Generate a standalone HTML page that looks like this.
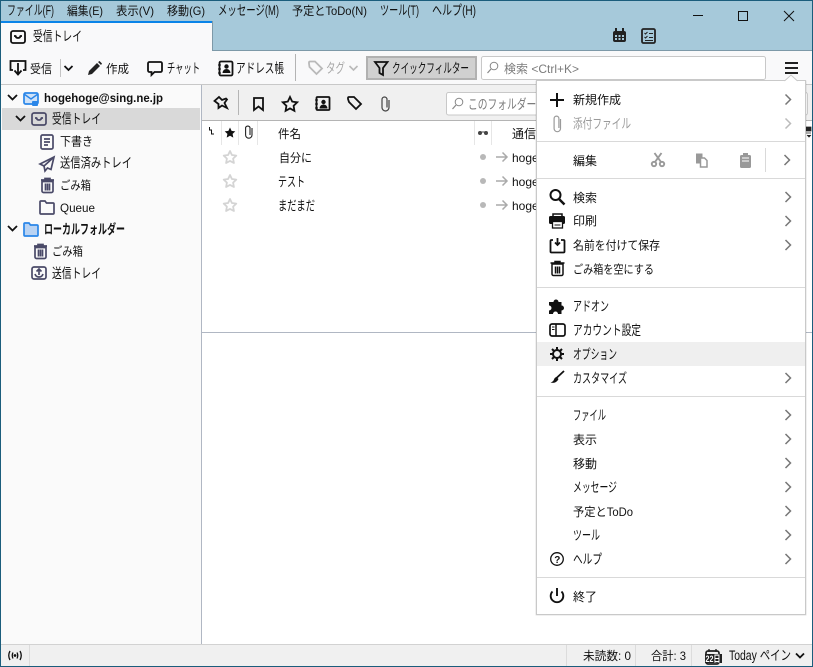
<!DOCTYPE html>
<html lang="ja"><head><meta charset="utf-8"><title>受信トレイ</title>
<style>
html,body{margin:0;padding:0;background:#fff}
svg{display:block}
text{font-family:"Liberation Sans","Noto Sans CJK JP",sans-serif;font-size:12px;fill:#111}
text.k{font-size:13.500px}
.g{fill:#9a9a9a}
.s{fill:none;stroke:#111;stroke-width:1.8}
.f{fill:none;stroke:#4a4a68;stroke-width:1.7}
.c{fill:none;stroke:#777;stroke-width:1.5}
.st{fill:none;stroke:#d4d4d4;stroke-width:1.8;stroke-linejoin:round}
</style></head><body>
<svg xmlns="http://www.w3.org/2000/svg" width="813" height="667" viewBox="0 0 813 667">
<!-- window -->
<rect width="813" height="667" fill="#1b5d7c"/>
<rect x="1" y="1" width="811" height="50" fill="#a6c9da"/>
<rect x="1" y="51" width="811" height="33" fill="#f9f9fa"/>
<rect x="1" y="50" width="811" height="1" fill="#7d99a8"/>
<rect x="1" y="84" width="811" height="1" fill="#c8c8c8"/>
<rect x="1" y="85" width="200" height="559" fill="#fafafa"/>
<rect x="201" y="85" width="1" height="559" fill="#b0b7c3"/>
<rect x="202" y="85" width="610" height="559" fill="#fff"/>
<rect x="202" y="85" width="610" height="35" fill="#f0f0f0"/>
<rect x="202" y="120" width="610" height="1" fill="#b4b4b4"/>
<rect x="202" y="332" width="610" height="1" fill="#b0b7c3"/>
<rect x="1" y="644" width="811" height="22" fill="#f0f0f0"/>
<rect x="1" y="644" width="811" height="1" fill="#d2d2d2"/>

<!-- menubar -->
<text class="k" x="7" y="15" textLength="47" lengthAdjust="spacingAndGlyphs">ファイル(F)</text>
<text x="67" y="15" textLength="36" lengthAdjust="spacingAndGlyphs">編集(E)</text>
<text x="116" y="15" textLength="38" lengthAdjust="spacingAndGlyphs">表示(V)</text>
<text x="167" y="15" textLength="38" lengthAdjust="spacingAndGlyphs">移動(G)</text>
<text class="k" x="218" y="15" textLength="61" lengthAdjust="spacingAndGlyphs">メッセージ(M)</text>
<text x="292" y="15" textLength="75" lengthAdjust="spacingAndGlyphs">予定とToDo(N)</text>
<text class="k" x="380" y="15" textLength="39" lengthAdjust="spacingAndGlyphs">ツール(T)</text>
<text class="k" x="432" y="15" textLength="44" lengthAdjust="spacingAndGlyphs">ヘルプ(H)</text>
<g fill="#111"><rect x="693" y="15" width="10" height="1"/></g>
<rect x="738.500" y="11.500" width="9" height="9" fill="none" stroke="#111"/>
<path d="M784 11l10 10M794 11l-10 10" stroke="#111" fill="none"/>

<!-- tab -->
<rect x="1" y="21" width="211" height="29" fill="#f9f9fa"/>
<rect x="212" y="21" width="1" height="30" fill="#7d99a8"/>
<rect x="1" y="21" width="211" height="2" fill="#0a84e8"/>
<rect x="1" y="50" width="211" height="1" fill="#f9f9fa"/>
<rect x="11" y="31" width="14" height="12" rx="2" class="s" stroke-width="2"/>
<path d="M14 36h1.500q.5 2 2.500 2t2.500-2h1.500" class="s" stroke-width="1.300"/>
<text class="k" x="33" y="41" textLength="49" lengthAdjust="spacingAndGlyphs">受信トレイ</text>
<!-- title right icons -->
<g fill="#222"><rect x="613" y="31" width="13" height="11" rx="2"/><rect x="615" y="28" width="2" height="4"/><rect x="622" y="28" width="2" height="4"/></g>
<g fill="#a6c9da"><rect x="615" y="35" width="2" height="2"/><rect x="618.500" y="35" width="2" height="2"/><rect x="622" y="35" width="2" height="2"/><rect x="615" y="38" width="2" height="2"/><rect x="618.500" y="38" width="2" height="2"/><rect x="622" y="38" width="2" height="2"/></g>
<rect x="642" y="29" width="13" height="14" rx="1.500" fill="none" stroke="#222" stroke-width="1.800"/>
<path d="M644.500 33l1 1 2-2M644.500 37l1 1 2-2M649 33.500h4M649 37.500h4M645 40.500h8" stroke="#222" fill="none"/>

<!-- main toolbar -->
<path d="M13 70h-2.500v-9h15v9h-2.500" class="s"/><path d="M18 63v11m-3.500-3.500l3.500 4 3.500-4" class="s"/>
<text x="30" y="73" textLength="22" lengthAdjust="spacingAndGlyphs">受信</text>
<rect x="60" y="59" width="1" height="18" fill="#c4c4c4"/>
<path d="M64.500 66l4 4 4-4" class="s"/>
<path d="M88 75l1-4 8-8 3 3-8 8z" fill="#222"/><path d="M98 62l1.500-1 2.500 2.500-1 1.500z" fill="#222"/>
<text x="106" y="73" textLength="23" lengthAdjust="spacingAndGlyphs">作成</text>
<path d="M149.500 62h11a1.500 1.500 0 0 1 1.500 1.500v7a1.500 1.500 0 0 1-1.500 1.500h-6l-3 3v-3h-2a1.500 1.500 0 0 1-1.500-1.500v-7a1.500 1.500 0 0 1 1.500-1.500z" class="s"/>
<text class="k" x="167" y="73" textLength="33" lengthAdjust="spacingAndGlyphs">チャット</text>
<rect x="219.500" y="61.500" width="13" height="14" rx="1.500" class="s"/>
<path d="M218 65h3M218 69h3M218 73h3" stroke="#111"/><circle cx="226.500" cy="66.500" r="2.200" fill="#111"/><path d="M222.500 73q.5-4 4-4t4 4z" fill="#111"/>
<text class="k" x="236" y="73" textLength="48" lengthAdjust="spacingAndGlyphs">アドレス帳</text>
<rect x="295" y="54" width="1" height="27" fill="#b4b4b4"/>
<path d="M309 63.500v-1a1 1 0 0 1 1-1h5l7 7-5.500 5.500-7-7z" fill="none" stroke="#b9b9b9" stroke-width="1.800"/>
<text class="k" x="326" y="73" textLength="19" lengthAdjust="spacingAndGlyphs" style="fill:#a8a8a8">タグ</text>
<path d="M349.500 66l4 4 4-4" fill="none" stroke="#b9b9b9" stroke-width="1.600"/>
<rect x="367" y="57" width="109" height="22" fill="#d0d0d0" stroke="#b1b1b1" stroke-width="2"/>
<path d="M375 62h12.500l-4.500 6v7l-3.500-2v-5z" class="s"/>
<text class="k" x="392" y="73" textLength="77" lengthAdjust="spacingAndGlyphs">クイックフィルター</text>
<rect x="481.500" y="56.500" width="284" height="23" rx="2" fill="#fff" stroke="#c8c8c8"/>
<circle cx="494" cy="66" r="3.800" fill="none" stroke="#888"/><path d="M491 69l-3.500 4" stroke="#888" stroke-width="1.200"/>
<text x="504" y="73" textLength="75" lengthAdjust="spacingAndGlyphs" style="fill:#7c7c7c">検索 &lt;Ctrl+K&gt;</text>
<path d="M785 63h13M785 68h13M785 73h13" stroke="#222" stroke-width="2" fill="none"/>

<!-- folder pane -->
<rect x="2" y="108" width="198" height="22" fill="#d9d9d9"/>
<path d="M8 95l4.500 4.500L17 95" class="s"/>
<rect x="24" y="93" width="14" height="11" rx="1.500" fill="#cfe2f8" stroke="#2a86e8" stroke-width="1.700"/>
<path d="M24 94l7 5 7-5" fill="none" stroke="#2a86e8" stroke-width="1.400"/>
<rect x="32" y="101" width="6" height="5" rx="1" fill="#2a86e8"/>
<text x="44" y="102" textLength="119" lengthAdjust="spacingAndGlyphs" style="font-weight:700;font-size:12px">hogehoge@sing.ne.jp</text>
<path d="M16 116l4.500 4.500L25 116" class="s"/>
<rect x="32" y="113" width="14" height="12" rx="2" class="f"/><path d="M35 118h1.500q.5 2 2.500 2t2.500-2H43" class="f" stroke-width="1.200"/>
<text class="k" x="52" y="123.500" textLength="49" lengthAdjust="spacingAndGlyphs">受信トレイ</text>
<rect x="41" y="135" width="12" height="14" rx="1.500" class="f"/><path d="M44 139h6M44 142h6M44 145h4" class="f" stroke-width="1"/>
<text x="60" y="145.500" textLength="33" lengthAdjust="spacingAndGlyphs">下書き</text>
<path d="M54 157l-14 7 4 2 1 5 2.500-3 3.500 1.500z" class="f"/><path d="M44 166l10-9" class="f" stroke-width="1.200"/>
<text class="k" x="60" y="167.500" textLength="72" lengthAdjust="spacingAndGlyphs">送信済みトレイ</text>
<path d="M42 181.500h11v9.500a1.500 1.500 0 0 1-1.500 1.500h-8a1.500 1.500 0 0 1-1.500-1.500zM41 180h13M45 180v-1.500h5V180M45.500 183.500v7M47.500 183.500v7M49.500 183.500v7" class="f" stroke-width="1.400"/>
<text x="60" y="189.500" textLength="31" lengthAdjust="spacingAndGlyphs">ごみ箱</text>
<path d="M40 204v-2a1 1 0 0 1 1-1h4l1.500 2H53a1 1 0 0 1 1 1v9a1 1 0 0 1-1 1H41a1 1 0 0 1-1-1z" class="f"/>
<text x="60" y="212" textLength="35" lengthAdjust="spacingAndGlyphs">Queue</text>
<path d="M8 226l4.500 4.500L17 226" class="s"/>
<path d="M24 226v-2a1 1 0 0 1 1-1h4l1.500 2H37a1 1 0 0 1 1 1v9a1 1 0 0 1-1 1H25a1 1 0 0 1-1-1z" fill="#b9d3f3" stroke="#2a86e8" stroke-width="1.700"/>
<text class="k" x="44" y="234" textLength="81" lengthAdjust="spacingAndGlyphs" style="font-weight:700">ローカルフォルダー</text>
<path d="M35 247.500h11v9.500a1.500 1.500 0 0 1-1.500 1.500h-8a1.500 1.500 0 0 1-1.500-1.500zM34 246h13M38 246v-1.500h5V246M38.500 249.500v7M40.500 249.500v7M42.500 249.500v7" class="f" stroke-width="1.400"/>
<text x="52" y="255.500" textLength="31" lengthAdjust="spacingAndGlyphs">ごみ箱</text>
<rect x="32" y="267" width="14" height="12" rx="2" class="f"/><path d="M39 275v-6m-2.500 2.500l2.500-2.500 2.500 2.500M35 274q1 3 4 3t4-3" class="f" stroke-width="1.300"/>
<text class="k" x="52" y="278" textLength="49" lengthAdjust="spacingAndGlyphs">送信トレイ</text>

<!-- quick filter bar -->
<path d="M219 97l3 3 4-1.500 1 1-2.500 3.500 2.500 5-5-2.500-3.500 2.500 0-4-4-3z" class="s"/>
<rect x="238" y="90" width="1" height="25" fill="#b4b4b4"/>
<path d="M254 98h9v12l-4.500-3.500L254 110z" class="s"/>
<path d="M290 97l2.200 4.600 5 .7-3.600 3.500.8 5-4.400-2.400-4.400 2.400.8-5-3.600-3.500 5-.7z" class="s"/>
<rect x="316.500" y="97" width="13" height="13" rx="1" class="s"/><path d="M315 100h3M315 104h3M315 108h3" stroke="#111"/><circle cx="323.500" cy="102" r="2.200" fill="#111"/><path d="M319.500 108.500q.5-4 4-4t4 4z" fill="#111"/>
<path d="M348 99v-1a1 1 0 0 1 1-1h5l7 7-5 5-7-7z" class="s"/>
<path d="M389 100v7.500a3.500 3.500 0 0 1-7 0v-8a2.500 2.500 0 0 1 5 0v8" fill="none" stroke="#444" stroke-width="1.200"/>
<rect x="446.500" y="92.500" width="361" height="22.500" rx="2" fill="#fff" stroke="#c8c8c8"/>
<circle cx="459" cy="102" r="3.800" fill="none" stroke="#888"/><path d="M456 105l-3.500 4" stroke="#888" stroke-width="1.200"/>
<text class="k" x="468" y="109" textLength="78" lengthAdjust="spacingAndGlyphs" style="fill:#7c7c7c">このフォルダーの</text>

<!-- thread header -->
<g fill="#e6e6e6"><rect x="221" y="121" width="1" height="24"/><rect x="238" y="121" width="1" height="24"/><rect x="257" y="121" width="1" height="24"/><rect x="474" y="121" width="1" height="24"/><rect x="491" y="121" width="1" height="24"/></g>
<path d="M209.500 127v3h2v4h2.500" fill="none" stroke="#111"/>
<path d="M230 127.500l1.600 3.400 3.700.5-2.700 2.500.7 3.700-3.300-1.800-3.300 1.800.7-3.700-2.700-2.500 3.700-.5z" fill="#111"/>
<path d="M252 128v7a3.200 3.200 0 0 1-6.400 0v-7.500a2.400 2.400 0 0 1 4.400 0V135" fill="none" stroke="#222" stroke-width="1.100"/>
<text x="278" y="138" textLength="23" lengthAdjust="spacingAndGlyphs">件名</text>
<circle cx="480" cy="133" r="2" fill="#444"/><circle cx="486" cy="133" r="2" fill="#444"/><rect x="480" y="131.500" width="6" height="1" fill="#444"/>
<text x="512" y="138">通信相</text>

<!-- rows -->
<path d="M230 151l1.900 4 4.400.6-3.200 3 .8 4.400-3.900-2.100-3.900 2.100.8-4.400-3.200-3 4.400-.6z" class="st"/>
<text x="279" y="162" textLength="33" lengthAdjust="spacingAndGlyphs">自分に</text>
<circle cx="483" cy="157" r="3" fill="#b8b8b8"/>
<path d="M496 157h11m-4.500-4.500l4.500 4.500-4.500 4.500" fill="none" stroke="#aaa" stroke-width="1.500"/>
<text x="512" y="162">hogehoge</text>
<path d="M230 175l1.900 4 4.400.6-3.200 3 .8 4.400-3.900-2.100-3.900 2.100.8-4.400-3.200-3 4.400-.6z" class="st"/>
<text class="k" x="278" y="186.500" textLength="27" lengthAdjust="spacingAndGlyphs">テスト</text>
<circle cx="483" cy="181" r="3" fill="#b8b8b8"/>
<path d="M496 181h11m-4.500-4.500l4.500 4.500-4.500 4.500" fill="none" stroke="#aaa" stroke-width="1.500"/>
<text x="512" y="186">hogehoge</text>
<path d="M230 199l1.900 4 4.400.6-3.200 3 .8 4.400-3.900-2.100-3.900 2.100.8-4.400-3.200-3 4.400-.6z" class="st"/>
<text class="k" x="278" y="210.500" textLength="37" lengthAdjust="spacingAndGlyphs">まだまだ</text>
<circle cx="483" cy="205" r="3" fill="#b8b8b8"/>
<path d="M496 205h11m-4.500-4.500l4.500 4.500-4.500 4.500" fill="none" stroke="#aaa" stroke-width="1.500"/>
<text x="512" y="210">hogehoge</text>
<path d="M806 127h5v4h-5zM806 133h5M807 135l2 2 2-2" fill="#222" stroke="#222" stroke-width=".8"/>

<!-- popup menu -->
<rect x="535" y="80" width="272" height="536" fill="#000" opacity=".06" rx="2"/>
<rect x="536.500" y="80.500" width="269" height="534" fill="#fff" stroke="#c9c9c9"/>
<path d="M784.500 81l6.500-6 6.500 6" fill="#fff" stroke="#c9c9c9"/><rect x="785" y="81" width="12" height="1" fill="#fff"/>
<g fill="#d9d9d9"><rect x="537" y="141" width="268" height="1"/><rect x="537" y="178" width="268" height="1"/><rect x="537" y="287" width="268" height="1"/><rect x="537" y="396" width="268" height="1"/><rect x="537" y="577" width="268" height="1"/></g>
<rect x="537" y="342" width="268" height="24" fill="#efefef"/>
<rect x="765" y="148" width="1" height="24" fill="#d9d9d9"/>

<text x="573" y="104" textLength="48" lengthAdjust="spacingAndGlyphs">新規作成</text>
<text class="k g" x="573" y="128.500" textLength="58" lengthAdjust="spacingAndGlyphs">添付ファイル</text>
<text x="573" y="165" textLength="24" lengthAdjust="spacingAndGlyphs">編集</text>
<text x="573" y="202" textLength="24" lengthAdjust="spacingAndGlyphs">検索</text>
<text x="573" y="225" textLength="24" lengthAdjust="spacingAndGlyphs">印刷</text>
<text x="573" y="249.500" textLength="87" lengthAdjust="spacingAndGlyphs">名前を付けて保存</text>
<text x="573" y="273.500" textLength="81" lengthAdjust="spacingAndGlyphs">ごみ箱を空にする</text>
<text class="k" x="573" y="311" textLength="36" lengthAdjust="spacingAndGlyphs">アドオン</text>
<text class="k" x="573" y="335" textLength="68" lengthAdjust="spacingAndGlyphs">アカウント設定</text>
<text class="k" x="573" y="359" textLength="44" lengthAdjust="spacingAndGlyphs">オプション</text>
<text class="k" x="573" y="383" textLength="54" lengthAdjust="spacingAndGlyphs">カスタマイズ</text>
<text class="k" x="573" y="420" textLength="33" lengthAdjust="spacingAndGlyphs">ファイル</text>
<text x="573" y="444" textLength="24" lengthAdjust="spacingAndGlyphs">表示</text>
<text x="573" y="468" textLength="24" lengthAdjust="spacingAndGlyphs">移動</text>
<text class="k" x="573" y="492" textLength="44" lengthAdjust="spacingAndGlyphs">メッセージ</text>
<text x="573" y="516" textLength="60" lengthAdjust="spacingAndGlyphs">予定とToDo</text>
<text class="k" x="573" y="540" textLength="27" lengthAdjust="spacingAndGlyphs">ツール</text>
<text class="k" x="573" y="564" textLength="29" lengthAdjust="spacingAndGlyphs">ヘルプ</text>
<text x="573" y="601" textLength="24" lengthAdjust="spacingAndGlyphs">終了</text>

<!-- menu chevrons -->
<g class="c"><path class="c" d="M785.500 94.500l5 5-5 5"/><path class="c" style="stroke:#bbb" d="M785.500 118.500l5 5-5 5"/><path class="c" d="M784.500 155l5 5-5 5"/><path class="c" d="M785.500 192l5 5-5 5"/><path class="c" d="M785.500 216l5 5-5 5"/><path class="c" d="M785.500 240l5 5-5 5"/><path class="c" d="M785.500 373l5 5-5 5"/><path class="c" d="M785.500 410l5 5-5 5"/><path class="c" d="M785.500 434l5 5-5 5"/><path class="c" d="M785.500 458l5 5-5 5"/><path class="c" d="M785.500 482l5 5-5 5"/><path class="c" d="M785.500 506l5 5-5 5"/><path class="c" d="M785.500 530l5 5-5 5"/><path class="c" d="M785.500 554l5 5-5 5"/></g>

<!-- menu icons -->
<path d="M550 100h14M557 93v14" stroke="#111" stroke-width="2" fill="none"/>
<path d="M560.500 119v9.500a3.200 3.200 0 0 1-6.400 0v-10a2.400 2.400 0 0 1 4.800 0v9.500" fill="none" stroke="#9a9a9a" stroke-width="1.200"/>
<!-- scissors -->
<g fill="none" stroke="#999" stroke-width="1.900"><circle cx="654" cy="164" r="2.200"/><circle cx="662" cy="164" r="2.200"/><path d="M655 162l6.500-9M661 162l-6.500-9"/></g>
<!-- copy -->
<path d="M696.500 154h5.500v4h-2v5h-3.500z" fill="#999" stroke="#999"/><path d="M700.500 158h4l2.500 2.500v6.500h-6.500z" fill="#fff" stroke="#999" stroke-width="1.500"/>
<!-- paste -->
<rect x="740" y="155" width="11" height="13" rx="1.500" fill="#999"/><rect x="743" y="153" width="5" height="3" fill="#999"/><path d="M742 158h7M742 161h7" stroke="#fff"/>
<!-- search -->
<circle cx="555.500" cy="195" r="5" fill="none" stroke="#111" stroke-width="2"/><path d="M559 199l5.500 5.500" stroke="#111" stroke-width="2.500"/>
<!-- print -->
<path d="M553 218v-4h9v4" fill="none" stroke="#111" stroke-width="1.500"/><rect x="549" y="216" width="16" height="8" rx="1.500" fill="#111"/><rect x="552.500" y="221.500" width="10" height="6.500" fill="#fff" stroke="#111" stroke-width="1.300"/><path d="M554.500 225h6" stroke="#111"/>
<!-- save -->
<path d="M553 240h-1.500a1 1 0 0 0-1 1v10.500a1 1 0 0 0 1 1h12a1 1 0 0 0 1-1V241a1 1 0 0 0-1-1H561" class="s"/><path d="M557.500 238v7m-2.500-2.500l2.500 2.500 2.500-2.500" class="s" stroke-width="1.500"/>
<!-- trash -->
<path d="M552 264h11v10a1.500 1.500 0 0 1-1.500 1.500h-8a1.500 1.500 0 0 1-1.500-1.500zM550.500 263h14M555 263v-1.500h5V263M555.500 266.500v7M557.500 266.500v7M559.500 266.500v7" fill="none" stroke="#111" stroke-width="1.500"/>
<!-- puzzle -->
<path d="M549 302h4.500a2.500 2.500 0 1 1 5 0h3v3.500a2.500 2.500 0 1 1 0 5V314h-3.500a2.500 2.500 0 1 0-5 0H549v-3.500a2.500 2.500 0 1 0 0-5z" fill="#111"/>
<!-- account -->
<rect x="550" y="324" width="15" height="12" rx="2" fill="none" stroke="#111" stroke-width="1.700"/><path d="M556 324v12" stroke="#111" stroke-width="1.500"/><path d="M552 327h2.500M552 329.500h2.500" stroke="#111"/>
<!-- gear -->
<circle cx="557" cy="354" r="4" fill="none" stroke="#111" stroke-width="2"/><path d="M557 347v2.500M557 358.500v2.500M550 354h2.500M561.500 354h2.500M552 349l2 2M560 357l2 2M562 349l-2 2M554 357l-2 2" stroke="#111" stroke-width="2"/>
<!-- brush -->
<path d="M564 371l-7.500 7" stroke="#111" stroke-width="1.800"/><path d="M556.500 377q-2 .5-2.500 2.500t-3.500 3q3.500 1 5.500-.5t2.500-3z" fill="#111"/>
<!-- help -->
<circle cx="557" cy="559" r="6.300" fill="none" stroke="#111" stroke-width="1.300"/><text x="554.200" y="563" style="font-size:10px;font-weight:700">?</text>
<!-- power -->
<path d="M552.500 591.500a6.300 6.300 0 1 0 9 0" fill="none" stroke="#111" stroke-width="1.900"/><path d="M557 588v8" stroke="#111" stroke-width="1.900"/>

<!-- statusbar -->
<rect x="29" y="645" width="1" height="21" fill="#dcdcdc"/>
<g fill="none" stroke="#111" stroke-width="1.300"><path d="M10 651q-2.500 4.500 0 9M13 652.500q-1.500 3 0 6M20 651q2.500 4.500 0 9M17 652.500q1.500 3 0 6"/></g><circle cx="15" cy="655.500" r="1.400" fill="#111"/>
<rect x="566" y="645" width="1" height="21" fill="#dcdcdc"/><rect x="635" y="645" width="1" height="21" fill="#dcdcdc"/><rect x="691" y="645" width="1" height="21" fill="#dcdcdc"/>
<text x="583" y="660" textLength="48" lengthAdjust="spacingAndGlyphs">未読数: 0</text>
<text x="651" y="660" textLength="35" lengthAdjust="spacingAndGlyphs">合計: 3</text>
<rect x="706" y="651" width="13" height="13" rx="2" fill="none" stroke="#222" stroke-width="1.700"/><path d="M709 649v3M716 649v3" stroke="#222" stroke-width="1.300"/>
<rect x="705" y="654" width="17" height="9" fill="#222"/>
<text x="705.500" y="662" textLength="15" lengthAdjust="spacingAndGlyphs" style="font-size:9px;fill:#fff;font-weight:700">22日</text>
<text class="k" x="729" y="660" textLength="62" lengthAdjust="spacingAndGlyphs">Today ペイン</text>
<path d="M796 653.500l4 4 4-4" class="s"/>
</svg>
</body></html>
